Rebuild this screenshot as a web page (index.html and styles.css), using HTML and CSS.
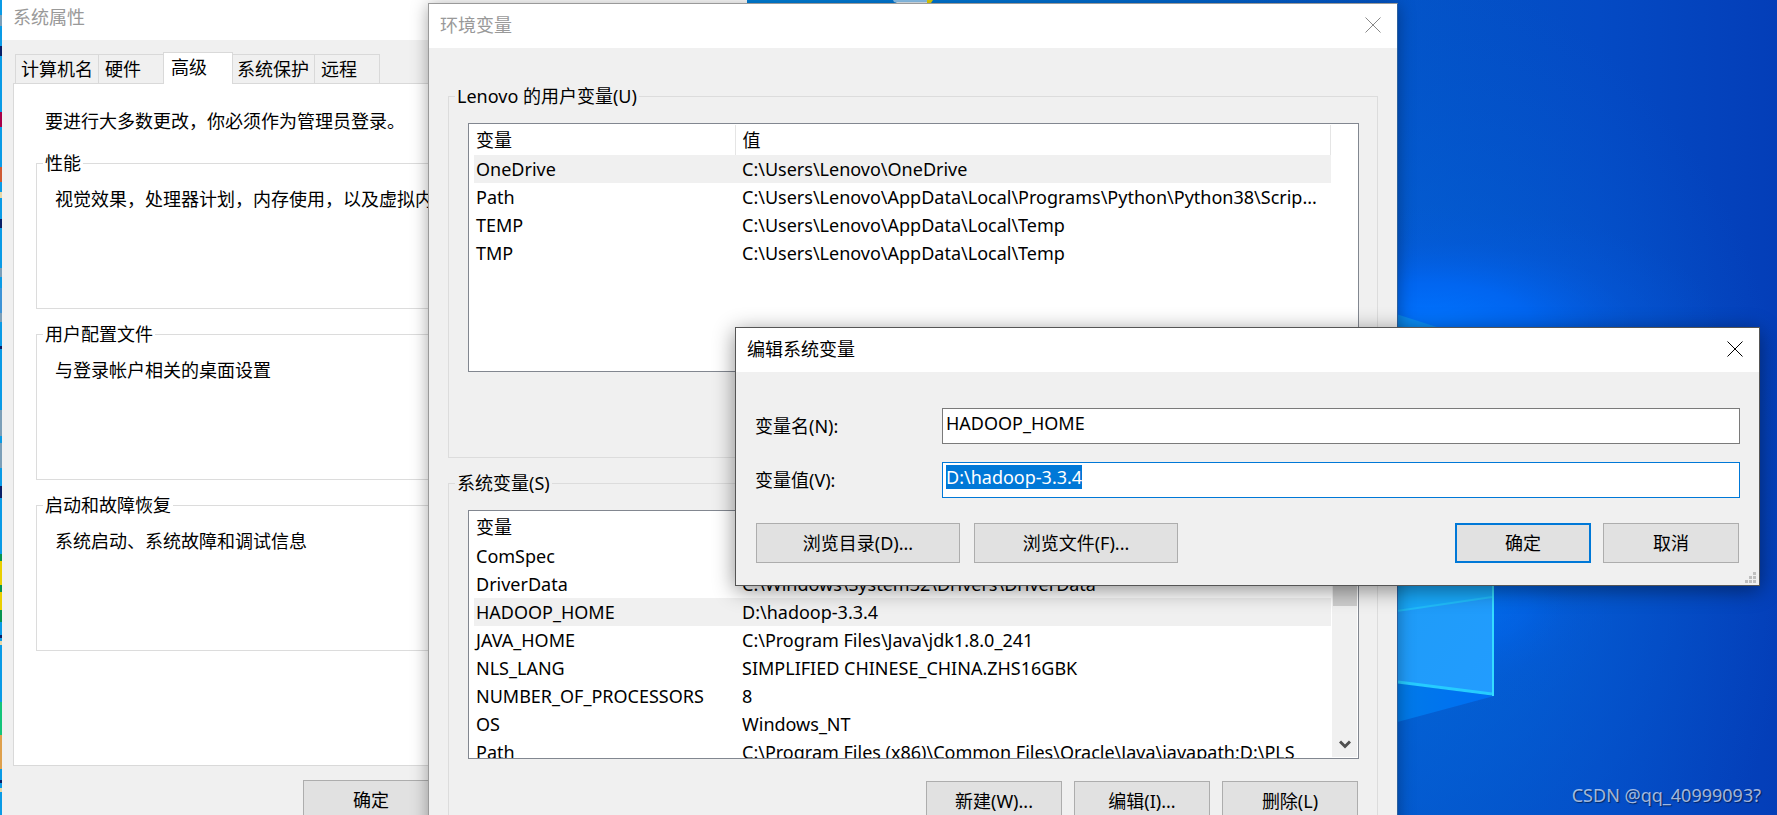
FILE: index.html
```html
<!DOCTYPE html>
<html lang="zh-CN">
<head>
<meta charset="utf-8">
<title>编辑系统变量</title>
<link rel="stylesheet" href="styles.css">
</head>
<body>
<div class="desktop">
  <svg class="wallpaper" viewBox="0 0 1777 815" preserveAspectRatio="xMaxYMin slice" aria-hidden="true">
    <defs>
      <linearGradient id="sky" x1="0" y1="0" x2="1" y2="0">
        <stop offset="0" stop-color="#0a9be6"/>
        <stop offset=".4" stop-color="#0083dc"/>
        <stop offset=".6" stop-color="#0070d2"/>
        <stop offset=".79" stop-color="#0354c8"/>
        <stop offset=".9" stop-color="#044ac4"/>
        <stop offset="1" stop-color="#043eb8"/>
      </linearGradient>
      <radialGradient id="glow">
        <stop offset="0" stop-color="#0074ff"/>
        <stop offset=".35" stop-color="#0068f8" stop-opacity=".8"/>
        <stop offset=".7" stop-color="#045ae0" stop-opacity=".3"/>
        <stop offset="1" stop-color="#0455d8" stop-opacity="0"/>
      </radialGradient>
      <radialGradient id="side">
        <stop offset="0" stop-color="#0070dc" stop-opacity=".9"/>
        <stop offset=".5" stop-color="#0462d8" stop-opacity=".55"/>
        <stop offset="1" stop-color="#0458d0" stop-opacity="0"/>
      </radialGradient>
      <linearGradient id="pane" x1="0" y1="0" x2="1" y2="1">
        <stop offset="0" stop-color="#1e9cf6"/>
        <stop offset="1" stop-color="#229cff"/>
      </linearGradient>
      <linearGradient id="beam" x1="0" y1="0" x2="1" y2="0">
        <stop offset="0" stop-color="#007ce8"/>
        <stop offset="1" stop-color="#006cf4"/>
      </linearGradient>
    </defs>
    <rect width="1777" height="815" fill="url(#sky)"/>
    <ellipse cx="1380" cy="520" rx="420" ry="560" fill="url(#side)"/>
    <ellipse cx="1430" cy="325" rx="290" ry="120" fill="url(#glow)"/>
    <ellipse cx="1480" cy="600" rx="140" ry="110" fill="url(#glow)" opacity=".5"/>
    <path d="M1390 312 L1440 328 H1390Z" fill="#0a8cf4"/>
    <path d="M1390 682 L1494 696 L1390 724Z" fill="url(#beam)"/>
    <path d="M1390 560 H1494 V695 L1390 681Z" fill="url(#pane)"/>
    <path d="M1390 560 H1492 V597 L1390 612Z" fill="#18a8fa"/>
    <path d="M1390 612 L1492 597" stroke="#20bcfa" stroke-width="2" fill="none"/>
    <path d="M1390 681 L1492 694" stroke="#26ccff" stroke-width="3" fill="none"/>
    <path d="M1493 560 V696" stroke="#35dcff" stroke-width="2" fill="none"/>
    <path d="M893 0H928V3H897L894 2Z" fill="#8fc8f2"/>
    <path d="M896 2H927V4H898Z" fill="#e4eef6"/>
    <path d="M927 0h6l-2 3 h-4z" fill="#e8d400"/>
    <g class="icons-edge">
      <path fill="#7c9fb8" d="M0 15h2v11H0zM0 268h2v9H0zM0 313h2v9H0zM0 410h2v26H0zM0 443h2v25H0z"/>
      <path fill="#0a1f66" d="M0 46h2v10H0zM0 219h2v9H0zM0 346h2v3H0zM0 486h2v12H0zM0 635h2v3H0zM0 780h2v3H0z"/>
      <path fill="#a80048" d="M0 112h2v15H0z"/>
      <path fill="#cf5a33" d="M0 167h2v15H0z"/>
      <path fill="#e7d8a8" d="M0 192h2v6H0zM0 641h2v4H0zM0 788h2v4H0z"/>
      <path fill="#3d93d6" d="M0 288h2v25H0z"/>
      <path fill="#06944f" d="M0 554h2v68H0z"/>
      <path fill="#e9cf00" d="M0 561h2v24H0zM0 592h2v18H0z"/>
      <path fill="#14c47a" d="M0 702h2v33H0z"/>
      <path fill="#dfa04c" d="M0 735h2v34H0z"/>
    </g>
  </svg>

  <section class="window window-props">
    <header class="titlebar"><h2 class="title">系统属性</h2></header>
    <div class="props-body">
      <nav class="tabs" role="tablist">
        <button class="tab tab-first" role="tab">计算机名</button>
        <button class="tab" role="tab">硬件</button>
        <button class="tab tab-active" role="tab" aria-selected="true">高级</button>
        <button class="tab tab-wide" role="tab">系统保护</button>
        <button class="tab" role="tab">远程</button>
      </nav>
      <div class="tab-page" role="tabpanel">
        <p class="intro">要进行大多数更改，你必须作为管理员登录。</p>
        <fieldset class="group props-group">
          <legend>性能</legend>
          <p class="group-note">视觉效果，处理器计划，内存使用，以及虚拟内存</p>
        </fieldset>
        <fieldset class="group props-group">
          <legend>用户配置文件</legend>
          <p class="group-note">与登录帐户相关的桌面设置</p>
        </fieldset>
        <fieldset class="group props-group">
          <legend>启动和故障恢复</legend>
          <p class="group-note">系统启动、系统故障和调试信息</p>
        </fieldset>
      </div>
      <div class="props-actions"><button class="btn">确定</button></div>
    </div>
  </section>

  <section class="window window-env">
    <header class="titlebar">
      <h2 class="title">环境变量</h2>
      <button class="close" aria-label="关闭"><svg width="16" height="16" viewBox="0 0 16 16"><path d="M.5 .5 L15.5 15.5 M15.5 .5 L.5 15.5"/></svg></button>
    </header>
    <div class="env-body">
      <fieldset class="group env-group">
        <legend>Lenovo 的用户变量(U)</legend>
        <div class="list">
          <table class="vars">
            <thead><tr><th>变量</th><th>值</th></tr></thead>
            <tbody>
              <tr class="row-selected"><td>OneDrive</td><td>C:\Users\Lenovo\OneDrive</td></tr>
              <tr><td>Path</td><td>C:\Users\Lenovo\AppData\Local\Programs\Python\Python38\Scrip...</td></tr>
              <tr><td>TEMP</td><td>C:\Users\Lenovo\AppData\Local\Temp</td></tr>
              <tr><td>TMP</td><td>C:\Users\Lenovo\AppData\Local\Temp</td></tr>
            </tbody>
          </table>
        </div>
      </fieldset>
      <fieldset class="group env-group">
        <legend>系统变量(S)</legend>
        <div class="list">
          <table class="vars">
            <thead><tr><th>变量</th><th></th></tr></thead>
            <tbody>
              <tr><td>ComSpec</td><td></td></tr>
              <tr><td>DriverData</td><td>C:\Windows\System32\Drivers\DriverData</td></tr>
              <tr class="row-selected"><td>HADOOP_HOME</td><td>D:\hadoop-3.3.4</td></tr>
              <tr><td>JAVA_HOME</td><td>C:\Program Files\Java\jdk1.8.0_241</td></tr>
              <tr><td>NLS_LANG</td><td>SIMPLIFIED CHINESE_CHINA.ZHS16GBK</td></tr>
              <tr><td>NUMBER_OF_PROCESSORS</td><td>8</td></tr>
              <tr><td>OS</td><td>Windows_NT</td></tr>
              <tr><td>Path</td><td>C:\Program Files (x86)\Common Files\Oracle\Java\javapath;D:\PLS</td></tr>
            </tbody>
          </table>
          <div class="scrollbar">
            <div class="thumb"></div>
            <svg class="arrow" width="12" height="10" viewBox="0 0 12 10"><path d="M1 1.5 L6 6.5 L11 1.5"/></svg>
          </div>
        </div>
        <div class="env-actions">
          <button class="btn">新建(W)...</button>
          <button class="btn">编辑(I)...</button>
          <button class="btn">删除(L)</button>
        </div>
      </fieldset>
    </div>
  </section>

  <section class="window window-edit" role="dialog">
    <header class="titlebar">
      <h2 class="title">编辑系统变量</h2>
      <button class="close" aria-label="关闭"><svg width="16" height="16" viewBox="0 0 16 16"><path d="M.5 .5 L15.5 15.5 M15.5 .5 L.5 15.5"/></svg></button>
    </header>
    <form class="edit-body">
      <label for="var-name">变量名(N):</label>
      <input class="field" id="var-name" type="text" value="HADOOP_HOME">
      <label for="var-value">变量值(V):</label>
      <input class="field field-active" id="var-value" type="text" value="D:\hadoop-3.3.4">
      <div class="edit-actions">
        <div class="browse">
          <button class="btn btn-wide" type="button">浏览目录(D)...</button>
          <button class="btn btn-wide" type="button">浏览文件(F)...</button>
        </div>
        <div class="confirm">
          <button class="btn btn-default" type="button">确定</button>
          <button class="btn" type="button">取消</button>
        </div>
      </div>
    </form>
    <svg class="grip" width="11" height="11" viewBox="0 0 11 11" aria-hidden="true"><path d="M8 0h3v3H8zM4 4h3v3H4zM8 4h3v3H8zM0 8h3v3H0zM4 8h3v3H4zM8 8h3v3H8z"/></svg>
  </section>

  <span class="watermark">CSDN @qq_40999093?</span>
</div>
<script src="main.js"></script>
</body>
</html>
```
FILE: styles.css
```css
* { box-sizing: border-box; }

body {
  margin: 0;
  font-family: "Noto Sans", "Noto Sans CJK SC", sans-serif;
  font-size: 18px;
  line-height: 24px;
  color: #000;
}

h2, p { margin: 0; font: inherit; }

button, input { font: inherit; color: inherit; }

.desktop {
  position: relative;
  height: 100vh;
  overflow: hidden;
  background: #0448c2;
}

.wallpaper {
  position: absolute;
  inset: 0;
  width: 100%;
  height: 100%;
}

/* Windows */
.window {
  position: absolute;
  background: #f0f0f0;
}

.window-props { left: 2px; right: 1030px; top: 0; }

.window-env {
  left: 428px;
  right: 379px;
  top: 3px;
  border: 1px solid #9a9a9a;
  border-right-color: #2a5f9e;
  box-shadow: 0 2px 16px rgba(0, 0, 0, .35);
}

.window-edit {
  left: 735px;
  right: 17px;
  top: 327px;
  border: 1px solid #555;
  box-shadow: 0 4px 20px rgba(0, 0, 0, .45);
}

.titlebar {
  display: flex;
  align-items: center;
  justify-content: space-between;
  height: 44px;
  padding: 0 16px 2px 11px;
  background: #fff;
}

.title { color: #999; }
.window-edit .title { color: #000; }

.close {
  display: flex;
  padding: 0;
  border: 0;
  background: none;
}

.close svg { fill: none; stroke: #888; stroke-width: 1; }
.window-edit .close svg { stroke: #000; }

/* Shared controls */
.btn {
  width: 136px;
  height: 40px;
  padding: 0;
  border: 1px solid #adadad;
  background: #e1e1e1;
  white-space: nowrap;
}

.btn-wide { width: 204px; }
.btn-default { border: 2px solid #0078d7; }

.group {
  min-width: 0;
  margin: 0;
  padding: 0 6px;
  border: 1px solid #dcdcdc;
}

.group legend { padding: 0 2px; }

/* System properties */
.window-props .titlebar { height: 40px; padding-bottom: 6px; }
.props-body { padding: 12px 11px; }

.tabs {
  display: flex;
  align-items: flex-end;
  padding-left: 2px;
}

.tab {
  width: 65px;
  height: 29px;
  padding: 0 0 0 6px;
  border: 1px solid #d9d9d9;
  border-width: 1px 1px 0 0;
  background: #f0f0f0;
  text-align: left;
  white-space: nowrap;
}

.tab-first { width: 84px; padding-left: 5px; border-left-width: 1px; }
.tab-wide { width: 82px; padding-left: 4px; }

.tab-active {
  z-index: 1;
  width: 70px;
  height: 32px;
  margin: 0 0 -1px -1px;
  padding: 0 0 4px 7px;
  border-left-width: 1px;
  background: #fff;
}

.tab-page {
  padding: 25px 22px 114px;
  border: 1px solid #d9d9d9;
  background: #fff;
}

.intro { margin: 0 0 18px 9px; white-space: nowrap; }
.props-group { height: 158px; margin-bottom: 13px; }
.props-group:last-child { margin-bottom: 0; }
.group-note { margin: 12px 0 0 12px; white-space: nowrap; overflow: hidden; }

.props-actions { padding: 14px 0 0 290px; }

/* Environment variables */
.env-body { padding: 36px 19px 60px 19px; }
.env-group { min-height: 374px; padding-bottom: 22px; margin-bottom: 13px; }

.list {
  display: flex;
  height: 249px;
  margin: 15px 12px 0 13px;
  padding: 1px 1px 1px 5px;
  border: 1px solid #828790;
  background: #fff;
  overflow: hidden;
}

.vars {
  flex: 1;
  align-self: flex-start;
  margin-right: 26px;
  table-layout: fixed;
  border-collapse: collapse;
}

.vars th, .vars td {
  height: 28px;
  padding: 0 0 0 2px;
  font-weight: inherit;
  text-align: left;
  white-space: nowrap;
}

.vars th { height: 30px; border-right: 1px solid #e5e5e5; }
.vars th:first-child { width: 261px; }
.vars th:last-child, .vars td:last-child { padding-left: 7px; }
.row-selected { background: #f0f0f0; }

.scrollbar {
  display: flex;
  flex-direction: column;
  align-items: center;
  justify-content: space-between;
  width: 25px;
  padding-bottom: 7px;
  background: #f0f0f0;
}

.vars:has(+ .scrollbar) { margin-right: 1px; }
.thumb { width: 24px; height: 94px; background: #cdcdcd; }
.arrow { fill: none; stroke: #505050; stroke-width: 3; }

.env-actions {
  display: flex;
  justify-content: flex-end;
  gap: 12px;
  margin: 22px 13px 0 0;
}

/* Edit dialog */
.edit-body {
  display: grid;
  grid-template-columns: 187px 1fr;
  row-gap: 18px;
  align-items: center;
  padding: 36px 19px 22px 19px;
}

.field {
  width: 100%;
  height: 36px;
  padding: 0 3px 6px;
  border: 1px solid #7a7a7a;
  border-radius: 0;
  background: #fff;
  outline: 0;
}

.field-active, .field:focus { border-color: #0078d7; }
.field::selection { color: #fff; background: #0078d7; }

.edit-actions {
  display: flex;
  grid-column: 1 / -1;
  justify-content: space-between;
  padding: 7px 1px 0;
}

.browse, .confirm { display: flex; gap: 12px; }
.browse { gap: 14px; }

.grip {
  position: absolute;
  right: 3px;
  bottom: 2px;
  fill: #bfbfbf;
}

.watermark {
  position: absolute;
  right: 16px;
  bottom: 8px;
  color: rgba(255, 255, 255, .65);
  text-shadow: 1px 1px 1px rgba(0, 0, 0, .5);
}
```
FILE: main.js
```js
const valueField = document.getElementById("var-value");
valueField.focus();
valueField.select();
```
